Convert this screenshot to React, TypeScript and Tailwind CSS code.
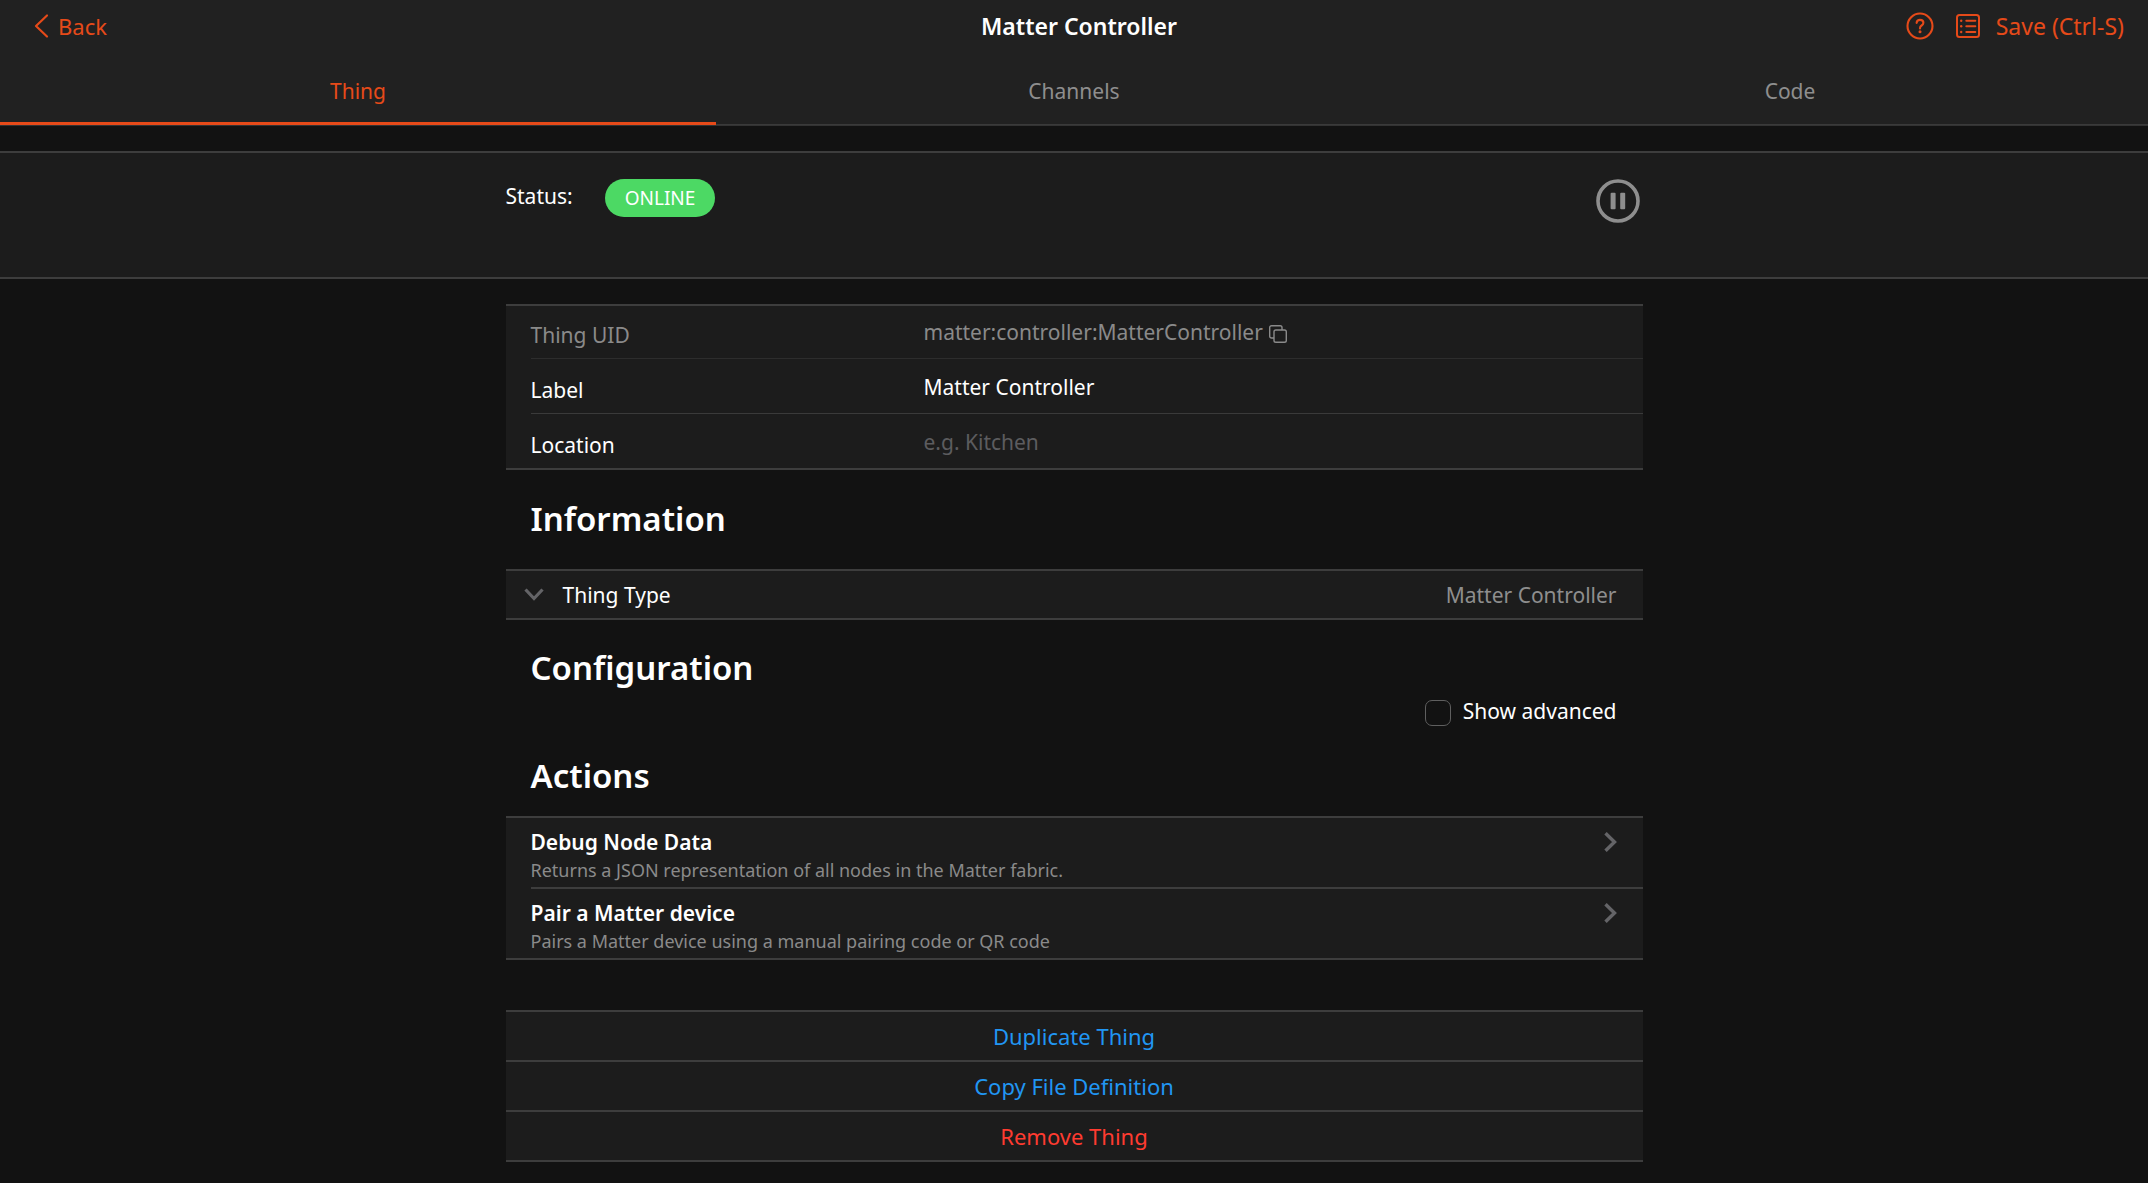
import { useState } from "react";
import type { ReactNode } from "react";

const TABS = ["Thing", "Channels", "Code"];

const ACTIONS = [
  { title: "Debug Node Data", text: "Returns a JSON representation of all nodes in the Matter fabric." },
  { title: "Pair a Matter device", text: "Pairs a Matter device using a manual pairing code or QR code" },
];

export default function App() {
  const [tab, setTab] = useState("Thing");
  const [label, setLabel] = useState("Matter Controller");
  const [location, setLocation] = useState("");
  const [advanced, setAdvanced] = useState(false);

  return (
    <div className="min-h-screen bg-[#121212] pb-5 font-['Noto_Sans',sans-serif] text-[21px] leading-7 text-white">
      {/* NAVBAR */}
      <header className="border-b border-[#333333] bg-[#212121]">
        <div className="grid h-[52px] grid-cols-3 items-center pr-6 pl-[34px] text-[22px] text-[#e64a19]">
          <a href="#back" className="flex items-center gap-[9px] justify-self-start">
            <BackIcon />
            Back
          </a>
          <h1 className="text-center text-[23px] font-semibold text-white">Matter Controller</h1>
          <div className="flex items-center justify-self-end">
            <button type="button" aria-label="Help" className="mr-[22px]"><HelpIcon /></button>
            <button type="button" aria-label="Details" className="mr-4"><ListIcon /></button>
            <button type="button" className="text-[23px]">Save (Ctrl-S)</button>
          </div>
        </div>

        {/* TABS */}
        <nav className="grid grid-cols-3">
          {TABS.map((name) => (
            <button
              key={name}
              type="button"
              onClick={() => setTab(name)}
              className={`flex h-[73px] items-start justify-center pt-[25px] text-[21px] ${
                tab === name ? "border-b-3 border-[#e64a19] text-[#e64a19]" : "border-b border-[#3a3a3a] text-[#8e8e8e]"
              }`}
            >
              {name}
            </button>
          ))}
        </nav>
      </header>

      {/* STATUS */}
      <section className="mt-[25px] h-32 border-y-2 border-[#3d3d3d] bg-[#1c1c1c]">
        <div className="mx-auto flex max-w-[1137px] items-start pt-[26px] pr-[3px]">
          <span className="pt-[3px]">Status:</span>
          <span className="ml-8 rounded-full bg-[#4cd964] px-5 text-[19px] leading-[38px]">ONLINE</span>
          <button type="button" aria-label="Pause" className="ml-auto text-[#8e8e8e]"><PauseIcon /></button>
        </div>
      </section>

      <main className="mx-auto max-w-[1137px]">
        <Card className="mt-[25px]">
          <div className="ml-[25px] grid h-[53px] grid-cols-[393px_1fr] border-b border-[#2d2d2d] text-[#8a8a8a]">
            <span className="pt-[15px]">Thing UID</span>
            <span className="flex h-10 items-end gap-[6px]">
              matter:controller:MatterController
              <button type="button" aria-label="Copy UID" className="mb-[3px]"><CopyIcon /></button>
            </span>
          </div>
          <div className="ml-[25px] grid h-[55px] grid-cols-[393px_1fr] border-b border-[#3a3a3a]">
            <label htmlFor="label" className="pt-[17px]">Label</label>
            <input
              id="label"
              value={label}
              onChange={(e) => setLabel(e.target.value)}
              className="h-[42px] bg-transparent pt-[14px] outline-none"
            />
          </div>
          <div className="ml-[25px] grid h-[54px] grid-cols-[393px_1fr]">
            <label htmlFor="location" className="pt-[17px]">Location</label>
            <input
              id="location"
              value={location}
              placeholder="e.g. Kitchen"
              onChange={(e) => setLocation(e.target.value)}
              className="h-[42px] bg-transparent pt-[14px] outline-none placeholder:text-[#5c5c5f]"
            />
          </div>
        </Card>

        <Heading className="mt-[26px]">Information</Heading>
        <Card className="mt-[27px]">
          <button type="button" className="flex h-[47px] w-full items-center pr-[26px] pl-[18px]">
            <ChevronDownIcon />
            <span className="ml-[19px]">Thing Type</span>
            <span className="ml-auto text-[#8e8e8e]">Matter Controller</span>
          </button>
        </Card>

        <Heading className="mt-[25px]">Configuration</Heading>
        <label className="mt-[5px] mr-[26px] ml-auto flex w-fit items-center gap-3">
          <input
            type="checkbox"
            checked={advanced}
            onChange={(e) => setAdvanced(e.target.checked)}
            className="mt-1 size-[26px] appearance-none rounded-[7px] border border-[#5f5f5f] checked:bg-[#e64a19]"
          />
          Show advanced
        </label>

        <Heading className="mt-[27px]">Actions</Heading>
        <Card className="mt-[17px]">
          <ul className="ml-[25px] divide-y-2 divide-[#3d3d3d]">
            {ACTIONS.map((action) => (
              <li key={action.title}>
                <button type="button" className="w-full pt-[10px] pr-[26px] pb-[5px] text-left">
                  <span className="flex items-center justify-between font-semibold">
                    {action.title}
                    <ChevronRightIcon />
                  </span>
                  <span className="mt-0.5 block text-[18px] leading-6 text-[#8a8a8a]">{action.text}</span>
                </button>
              </li>
            ))}
          </ul>
        </Card>

        <Card className="mt-[50px] grid divide-y-2 divide-[#3d3d3d] text-[22px]">
          <button type="button" className="py-[10px] text-[#2196f3]">Duplicate Thing</button>
          <button type="button" className="py-[10px] text-[#2196f3]">Copy File Definition</button>
          <button type="button" className="py-[10px] text-[#ff3b30]">Remove Thing</button>
        </Card>
      </main>
    </div>
  );
}

function Card({ className, children }: { className: string; children: ReactNode }) {
  return <section className={`border-y-2 border-[#3d3d3d] bg-[#1c1c1c] ${className}`}>{children}</section>;
}

function Heading({ className, children }: { className: string; children: ReactNode }) {
  return <h2 className={`pl-[25px] text-[33px] leading-[46px] font-semibold ${className}`}>{children}</h2>;
}

// ICONS
function BackIcon() {
  return (
    <svg width="15" height="26" viewBox="0 0 15 26" fill="none" stroke="currentColor" strokeWidth="2.2" strokeLinecap="round" strokeLinejoin="round">
      <path d="M13 2.5 2 13l11 10.5" />
    </svg>
  );
}

function HelpIcon() {
  return (
    <svg width="28" height="28" viewBox="0 0 28 28" fill="none" stroke="currentColor" strokeWidth="2.1" strokeLinecap="round">
      <circle cx="14" cy="14" r="12.5" />
      <path d="M10.6 10.9c.2-1.9 1.5-3 3.4-3s3.4 1.2 3.4 2.9c0 1.3-.7 2-1.8 2.7-1.1.7-1.6 1.3-1.6 2.5v.4" />
      <circle cx="14" cy="19.7" r="1.5" fill="currentColor" stroke="none" />
    </svg>
  );
}

function ListIcon() {
  return (
    <svg width="24" height="24" viewBox="0 0 24 24" fill="none" stroke="currentColor" strokeWidth="2" strokeLinecap="round">
      <rect x="1" y="1" width="22" height="22" rx="2.5" />
      <path d="M10.3 6.7h9M10.3 12.3h9M10.3 18h9" />
      <g fill="currentColor" stroke="none">
        <circle cx="5.2" cy="6.7" r="1.2" />
        <circle cx="5.2" cy="12.3" r="1.2" />
        <circle cx="5.2" cy="18" r="1.2" />
      </g>
    </svg>
  );
}

function PauseIcon() {
  return (
    <svg width="44" height="44" viewBox="0 0 44 44" fill="none">
      <circle cx="22" cy="22" r="20" stroke="currentColor" strokeWidth="3.6" />
      <rect x="14.6" y="13.8" width="5" height="16.4" rx="1" fill="currentColor" />
      <rect x="24.2" y="13.8" width="5" height="16.4" rx="1" fill="currentColor" />
    </svg>
  );
}

function CopyIcon() {
  return (
    <svg width="18" height="18" viewBox="0 0 18 18" fill="none" stroke="currentColor" strokeWidth="1.4" className="block">
      <rect x="5" y="5" width="12.3" height="12.3" rx="1.8" />
      <path d="M5 13H2.5A1.8 1.8 0 0 1 .7 11.2V2.5A1.8 1.8 0 0 1 2.5.7h8.7A1.8 1.8 0 0 1 13 2.5V5" />
    </svg>
  );
}

function ChevronDownIcon() {
  return (
    <svg width="20" height="14" viewBox="0 0 20 14" fill="none" stroke="#646467" strokeWidth="3.2">
      <path d="m1.5 1.5 8.5 9 8.5-9" />
    </svg>
  );
}

function ChevronRightIcon() {
  return (
    <svg width="13" height="20" viewBox="0 0 13 20" fill="none" stroke="#646467" strokeWidth="3.4">
      <path d="m1.5 1.2 9 8.8-9 8.8" />
    </svg>
  );
}
